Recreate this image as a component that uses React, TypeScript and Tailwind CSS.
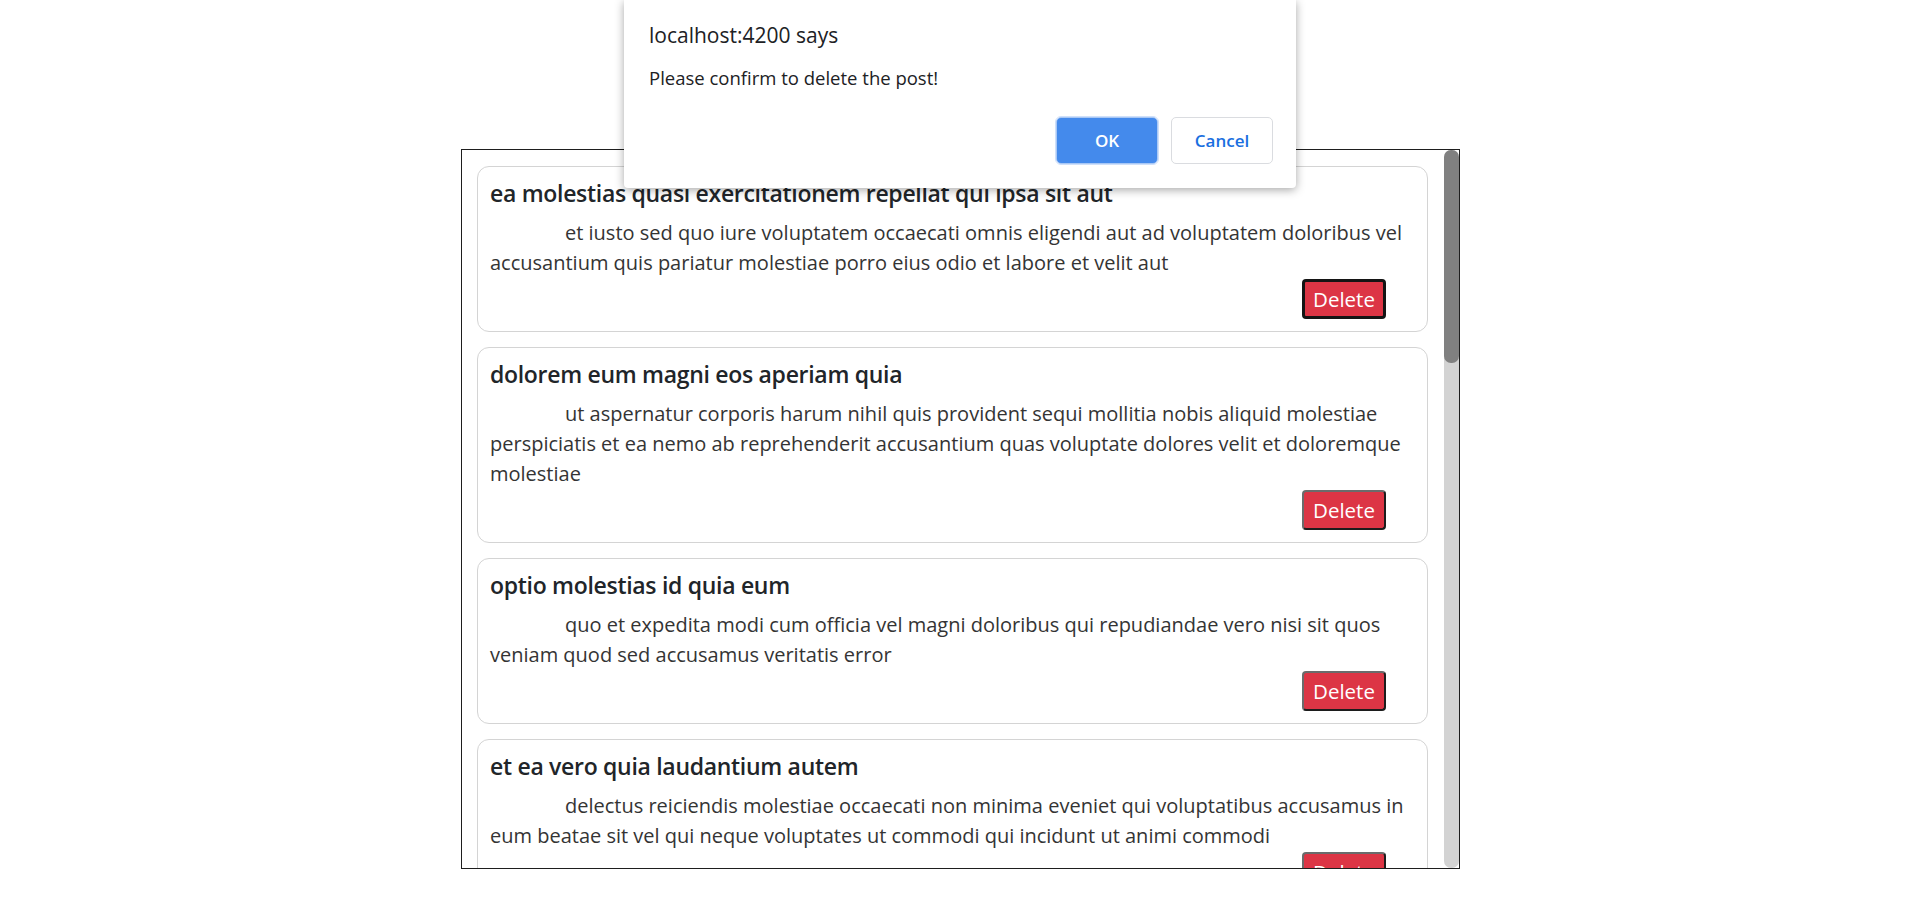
import React from "react";

const posts = [
  {
    title: "ea molestias quasi exercitationem repellat qui ipsa sit aut",
    body: "et iusto sed quo iure voluptatem occaecati omnis eligendi aut ad voluptatem doloribus vel accusantium quis pariatur molestiae porro eius odio et labore et velit aut",
    focused: true,
  },
  {
    title: "dolorem eum magni eos aperiam quia",
    body: "ut aspernatur corporis harum nihil quis provident sequi mollitia nobis aliquid molestiae perspiciatis et ea nemo ab reprehenderit accusantium quas voluptate dolores velit et doloremque molestiae",
    focused: false,
  },
  {
    title: "optio molestias id quia eum",
    body: "quo et expedita modi cum officia vel magni doloribus qui repudiandae vero nisi sit quos veniam quod sed accusamus veritatis error",
    focused: false,
  },
  {
    title: "et ea vero quia laudantium autem",
    body: "delectus reiciendis molestiae occaecati non minima eveniet qui voluptatibus accusamus in eum beatae sit vel qui neque voluptates ut commodi qui incidunt ut animi commodi",
    focused: false,
  },
];

function Card({ title, body, focused }: { title: string; body: string; focused: boolean }) {
  return (
    <div className="shrink-0 border border-[#d4d4d4] rounded-[12px] pt-[11px] px-[12px] pb-[12px] bg-white">
      <h5 className="text-[23px] leading-[30px] font-semibold tracking-[-0.3px] text-[#212529] mb-[10px]">{title}</h5>
      <p className="text-[20px] leading-[30px] text-[#343434] indent-[75px]">{body}</p>
      <div className="flex justify-end pr-[29px] pt-[1px]">
        <button
          className={
            focused
              ? "w-[84px] h-[40px] rounded-[4px] bg-[#dc3545] text-white text-[20.5px] leading-none border-[3px] border-[#141414]"
              : "w-[84px] h-[40px] rounded-[4px] bg-[#dc3545] text-white text-[20.5px] leading-none border-2 border-t-[#6b6b6b] border-l-[#6b6b6b] border-b-[#1c1c1c] border-r-[#1c1c1c]"
          }
        >
          Delete
        </button>
      </div>
    </div>
  );
}

export default function App() {
  return (
    <div
      className="relative min-h-screen bg-white"
      style={{ fontFamily: '"Open Sans", "Noto Sans", sans-serif' }}
    >
      <div className="pt-[149px] pl-[461px]">
        <div className="w-[999px] h-[720px] border border-[#1e1e1e] flex">
          <div className="flex-1 overflow-hidden pt-[16px] pl-[15px] pr-[16px] flex flex-col gap-[15px]">
            {posts.map((p, i) => (
              <Card key={i} {...p} />
            ))}
          </div>
          <div className="w-[15px] bg-[#d3d3d3] rounded-[7px] flex flex-col">
            <div className="h-[213px] bg-[#808080] rounded-[7px]" />
          </div>
        </div>
      </div>

      <div className="absolute top-0 left-[624px] w-[672px] h-[188px] bg-white rounded-b-[4px] shadow-[0_2px_10px_rgba(0,0,0,0.35)] pt-[22px] pl-[25px] pr-[23px] flex flex-col">
        <div className="text-[21px] leading-[26px] text-[#202124]">localhost:4200 says</div>
        <div className="mt-[19px] text-[18.5px] leading-[22px] text-[#202124]">Please confirm to delete the post!</div>
        <div className="mt-[28px] flex justify-end gap-[13px]">
          <button className="w-[102px] h-[47px] rounded-[5px] bg-[#448aec] text-white text-[17px] font-semibold border border-[#a9c8f5] outline outline-1 outline-[#cfe0fa]">
            OK
          </button>
          <button className="w-[102px] h-[47px] rounded-[5px] bg-white text-[#1a6fe0] text-[17px] font-semibold border border-[#dadce0]">
            Cancel
          </button>
        </div>
      </div>
    </div>
  );
}
